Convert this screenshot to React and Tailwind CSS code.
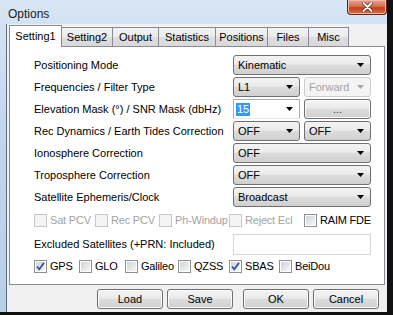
import React from "react";

const FONT = { fontFamily: '"Liberation Sans", Arial, sans-serif' };

const BTN_BG = "bg-[linear-gradient(#f3f3f3,#ebebeb_45%,#dddddd_50%,#cfcfcf)]";

function Arrow({ disabled }) {
  return (
    <svg width="7" height="4" viewBox="0 0 7 4">
      <path d="M0 0h7L3.5 4z" fill={disabled ? "#a8a8a8" : "#000"} />
    </svg>
  );
}

function Combo({ value, wide, disabled }) {
  return (
    <div
      className={`${wide ? "w-[138px]" : "w-[67px]"} h-[20px] flex items-center justify-between pl-[4px] pr-[6px] rounded-[3px] border ${
        disabled
          ? "border-[#cdcdcd] bg-[#f4f4f4] text-[#a3a3a3]"
          : `border-[#707070] ${BTN_BG} text-black`
      }`}
    >
      <span>{value}</span>
      <Arrow disabled={disabled} />
    </div>
  );
}

function Check({ checked, disabled }) {
  return (
    <span
      className={`w-[13px] h-[13px] shrink-0 border p-[1px] ${
        disabled ? "border-[#c8c8c8] bg-[#f4f4f4]" : "border-[#8e8f8f] bg-white"
      }`}
    >
      <span
        className={`w-full h-full flex items-center justify-center ${
          disabled ? "bg-[#f4f4f4]" : "bg-[linear-gradient(135deg,#cfd3d8,#f7f7f7)]"
        }`}
      >
        {checked && (
          <svg width="9" height="9" viewBox="0 0 9 9">
            <path d="M1 4.5 L3.3 7.3 L8 0.8" stroke="#3a5493" strokeWidth="1.9" fill="none" />
          </svg>
        )}
      </span>
    </span>
  );
}

function CheckItem({ label, checked, disabled, w }) {
  return (
    <div
      className={`${w} shrink-0 flex items-center gap-[3px] whitespace-nowrap tracking-[-0.2px] ${
        disabled ? "text-[#a3a3a3]" : "text-black"
      }`}
    >
      <Check checked={checked} disabled={disabled} />
      <span>{label}</span>
    </div>
  );
}

function Button({ children, className = "" }) {
  return (
    <div
      className={`w-[66px] h-[20px] flex items-center justify-center rounded-[3px] border border-[#707070] ${BTN_BG} shadow-[inset_0_0_0_1px_#fcfcfc] ${className}`}
    >
      {children}
    </div>
  );
}

function Row({ label, children, h = "h-[22px]" }) {
  return (
    <div className={`${h} flex items-center`}>
      <div className="flex-1 whitespace-nowrap">{label}</div>
      <div className="w-[138px] flex justify-between">{children}</div>
    </div>
  );
}

const tabs = [
  ["Setting2", "w-[51px]"],
  ["Output", "w-[46px]"],
  ["Statistics", "w-[57px]"],
  ["Positions", "w-[52px]"],
  ["Files", "w-[41px]"],
  ["Misc", "w-[40px]"],
];

export default function App() {
  return (
    <div className="w-[393px] h-[315px] bg-[#111] overflow-hidden text-[11px] text-black" style={FONT}>
      <div className="w-[387px] h-[312px] flex flex-col bg-[linear-gradient(180deg,#d8e6f5,#c2d6ec_40%,#b9cfe8)]">
        {/* title bar */}
        <div className="h-[24px] shrink-0 flex items-start justify-between">
          <span className="pl-[8px] pt-[5px] text-[12px] text-[#1b1b1b]">Options</span>
          <div className="w-[40px] h-[15px] rounded-b-[4px] border border-t-0 border-[#6b2214] bg-[linear-gradient(#e9a592,#d5704f_45%,#c7401c_55%,#d66c44)] flex items-center justify-center shadow-[inset_0_0_0_1px_#f0b9a8]">
            <svg width="11" height="10" viewBox="0 0 11 10">
              <path d="M1.5 1 L9.5 9 M9.5 1 L1.5 9" stroke="#5b1d10" strokeWidth="3.4" strokeLinecap="round" />
              <path d="M1.5 1 L9.5 9 M9.5 1 L1.5 9" stroke="#fff" strokeWidth="1.9" strokeLinecap="round" />
            </svg>
          </div>
        </div>

        {/* body */}
        <div className="flex-1 flex">
          <div className="w-[7px] shrink-0 border-r border-[#5d6d80]" />
          <div className="flex-1 bg-[#f0f0f0] px-[2px] pt-[1px] flex flex-col">
            {/* tabs */}
            <div className="h-[22px] flex items-end relative z-10">
              <div className="w-[53px] h-[22px] bg-white border border-b-0 border-[#898c95] flex items-center justify-center pb-[1px]">
                Setting1
              </div>
              {tabs.map(([t, w]) => (
                <div
                  key={t}
                  className={`${w} h-[19px] mb-[1px] border-t border-r border-[#898c95] bg-[linear-gradient(#f3f3f3,#ebebeb_50%,#dedede_50%,#d9d9d9)] flex items-center justify-center`}
                >
                  {t}
                </div>
              ))}
            </div>

            {/* tab page */}
            <div className="-mt-px h-[239px] bg-white border border-[#898c95] pt-[7px] pl-[24px] pr-[13px] flex flex-col">
              <Row label="Positioning Mode">
                <Combo value="Kinematic" wide />
              </Row>
              <Row label="Frequencies / Filter Type">
                <Combo value="L1" />
                <Combo value="Forward" disabled />
              </Row>
              <Row label="Elevation Mask (°) / SNR Mask (dbHz)">
                <div className="w-[67px] h-[20px] flex items-center justify-between pl-[2px] pr-[6px] border border-[#abadb3] border-b-[#e3e9ef] bg-white">
                  <span className="bg-[#3399ff] text-white px-[1px] leading-[13px]">15</span>
                  <Arrow />
                </div>
                <Button className="w-[67px] text-[#333]">...</Button>
              </Row>
              <Row label="Rec Dynamics / Earth Tides Correction">
                <Combo value="OFF" />
                <Combo value="OFF" />
              </Row>
              <Row label="Ionosphere Correction">
                <Combo value="OFF" wide />
              </Row>
              <Row label="Troposphere Correction">
                <Combo value="OFF" wide />
              </Row>
              <Row label="Satellite Ephemeris/Clock">
                <Combo value="Broadcast" wide />
              </Row>

              <div className="h-[24px] flex items-center">
                <CheckItem label="Sat PCV" disabled w="w-[61px]" />
                <CheckItem label="Rec PCV" disabled w="w-[64px]" />
                <CheckItem label="Ph-Windup" disabled w="w-[70px]" />
                <CheckItem label="Reject Ecl" disabled w="w-[75px]" />
                <CheckItem label="RAIM FDE" w="w-[66px]" />
              </div>

              <Row label="Excluded Satellites (+PRN: Included)" h="h-[24px]">
                <div className="w-[138px] h-[21px] border border-[#d3d6db] bg-white" />
              </Row>

              <div className="h-[20px] flex items-center">
                <CheckItem label="GPS" checked w="w-[45px]" />
                <CheckItem label="GLO" w="w-[46px]" />
                <CheckItem label="Galileo" w="w-[53px]" />
                <CheckItem label="QZSS" w="w-[51px]" />
                <CheckItem label="SBAS" checked w="w-[50px]" />
                <CheckItem label="BeiDou" w="w-[60px]" />
              </div>
            </div>

            {/* buttons */}
            <div className="mt-[4px] flex pl-[88px]">
              <Button>Load</Button>
              <Button className="ml-[4px]">Save</Button>
              <Button className="ml-[10px]">OK</Button>
              <Button className="ml-[4px]">Cancel</Button>
            </div>
          </div>
        </div>
      </div>
    </div>
  );
}
